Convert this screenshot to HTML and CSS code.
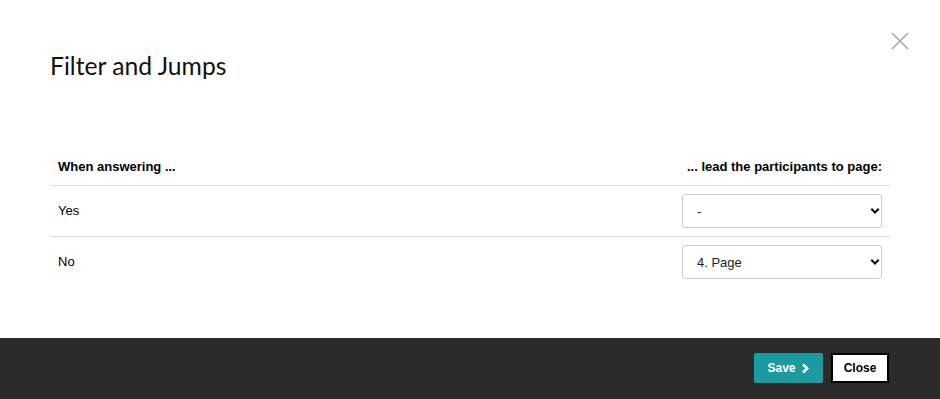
FILE: index.html
```html
<!DOCTYPE html>
<html>
<head>
<meta charset="utf-8">
<link rel="stylesheet" href="styles.css">
</head>
<body>
<div class="modal">
  <button class="close-x" aria-label="Close">
    <svg width="20" height="20" viewBox="0 0 20 20"><path d="M2 2 L18 18 M18 2 L2 18" stroke="#a8a8a8" stroke-width="1.6" fill="none"/></svg>
  </button>
  <div class="modal-body">
    <h1 class="title">Filter and Jumps</h1>
    <table class="jumps">
      <thead>
        <tr>
          <th class="left">When answering ...</th>
          <th class="right">... lead the participants to page:</th>
        </tr>
      </thead>
      <tbody>
        <tr>
          <td>Yes</td>
          <td class="right">
            <div class="select-wrap">
              <select class="select"><option>-</option></select>
              <svg class="chev" width="10" height="8" viewBox="0 0 10 8"><path d="M1.3 1.8 L5 5.5 L8.7 1.8" stroke="#111" stroke-width="2.2" fill="none"/></svg>
            </div>
          </td>
        </tr>
        <tr class="last">
          <td>No</td>
          <td class="right">
            <div class="select-wrap">
              <select class="select"><option>4. Page</option></select>
              <svg class="chev" width="10" height="8" viewBox="0 0 10 8"><path d="M1.3 1.8 L5 5.5 L8.7 1.8" stroke="#111" stroke-width="2.2" fill="none"/></svg>
            </div>
          </td>
        </tr>
      </tbody>
    </table>
  </div>
  <div class="modal-footer">
    <button class="btn btn-save">Save <svg width="9" height="11" viewBox="0 0 9 11"><path d="M2 1.5 L6.2 5.5 L2 9.5" stroke="#fff" stroke-width="2.6" fill="none"/></svg></button>
    <button class="btn btn-close">Close</button>
  </div>
</div>
</body>
</html>
```

FILE: styles.css
```css
html, body {
  margin: 0;
  padding: 0;
  background: #fff;
  font-family: "Liberation Sans", Arial, sans-serif;
  color: #000;
}
.modal {
  position: relative;
  width: 940px;
  height: 399px;
  display: flex;
  flex-direction: column;
}
.close-x {
  position: absolute;
  top: 31px;
  right: 30px;
  width: 20px;
  height: 20px;
  padding: 0;
  border: 0;
  background: none;
}
.close-x svg { display: block; }
.modal-body {
  flex: 1;
  padding: 51px 50px 0 50px;
}
.title {
  margin: 0;
  font-family: Lato, "Open Sans", sans-serif;
  font-weight: 400;
  font-size: 24.7px;
  line-height: 29px;
  color: #111;
}
.jumps {
  width: 100%;
  margin-top: 69px;
  border-collapse: collapse;
  font-size: 13px;
}
.jumps th {
  font-weight: bold;
  padding: 9px 8px;
  line-height: 18px;
  border-bottom: 1px solid #ddd;
}
.jumps th.left { text-align: left; }
.jumps .right { text-align: right; }
.jumps td {
  padding: 8px 8px;
  line-height: 16px;
  border-bottom: 1px solid #ddd;
  vertical-align: middle;
}
.jumps tr.last td { border-bottom: 0; }
.select-wrap {
  position: relative;
  display: block;
  margin-left: auto;
  width: 200px;
  height: 34px;
}
.select {
  display: block;
  -webkit-appearance: none;
  appearance: none;
  width: 100%;
  height: 34px;
  box-sizing: border-box;
  border: 1px solid #ccc;
  border-radius: 3px;
  background: #fff;
  padding: 0 24px 0 14px;
  font-family: "Liberation Sans", Arial, sans-serif;
  font-size: 13px;
  color: #222;
  text-align: left;
}
.chev {
  position: absolute;
  right: 2px;
  top: 13px;
  pointer-events: none;
}
.modal-footer {
  height: 61px;
  background: #2b2b2b;
  display: flex;
  justify-content: flex-end;
  align-items: flex-start;
  gap: 8px;
  padding: 15px 51px 0 0;
  box-sizing: border-box;
}
.btn {
  height: 30px;
  box-sizing: border-box;
  font-family: "Liberation Sans", Arial, sans-serif;
  font-size: 12px;
  font-weight: bold;
  border-radius: 2px;
  cursor: pointer;
}
.btn-save {
  width: 69px;
  background: #1a9aa1;
  color: #fff;
  border: 0;
  display: flex;
  align-items: center;
  justify-content: center;
  gap: 5px;
  padding: 0;
}
.btn-save svg { display: block; }
.btn-close {
  width: 58px;
  background: #fff;
  color: #000;
  border: 2px solid #000;
  border-radius: 0;
  padding: 0;
}
```
